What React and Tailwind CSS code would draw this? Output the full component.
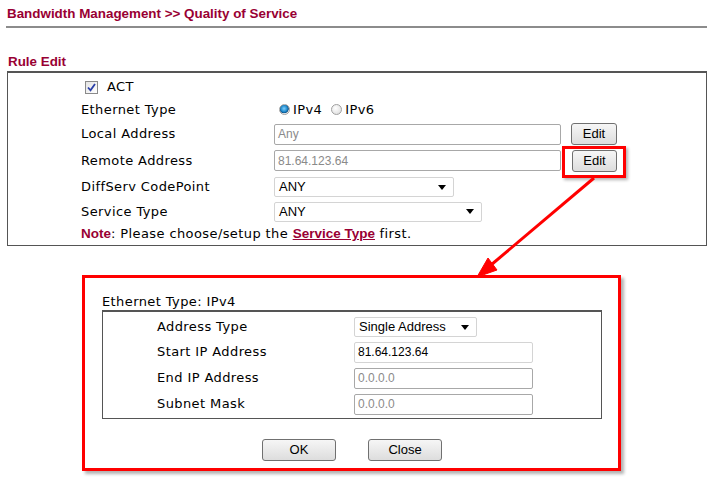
import React from 'react'

const maroon = 'text-[#990033]'
const dv = { fontFamily: '"DejaVu Sans", Verdana, sans-serif' }
const ar = { fontFamily: '"Liberation Sans", Arial, sans-serif' }

function Btn({ children, className = '' }) {
  return (
    <div
      style={ar}
      className={`flex items-center justify-center h-[22px] rounded-[3px] border border-[#707070] bg-[linear-gradient(#f6f6f6,#dddddd)] text-[13px] tracking-normal text-black ${className}`}
    >
      {children}
    </div>
  )
}

function TextBox({ value, disabled, className = '' }) {
  return (
    <div
      style={ar}
      className={`flex items-center h-[21px] px-[3px] rounded-[2px] border text-[12px] tracking-normal ${disabled ? 'border-[#a8a8a8] text-[#8a8a8a]' : 'border-[#d4d4d4] text-black'} bg-white ${className}`}
    >
      {value}
    </div>
  )
}

function Select({ value, className = '' }) {
  return (
    <div
      style={ar}
      className={`flex items-center justify-between h-[20px] pl-[4px] pr-[7px] rounded-[2px] border border-[#d4d4d4] bg-white text-[13px] tracking-normal text-black ${className}`}
    >
      <span>{value}</span>
      <svg width="8" height="5" viewBox="0 0 8 5"><path d="M0 0h8L4 5z" fill="#000" /></svg>
    </div>
  )
}

function Radio({ on }) {
  return (
    <span
      className={`inline-block w-[11px] h-[11px] rounded-full border border-[#a0a0a0] ${on ? 'bg-[radial-gradient(circle_at_45%_40%,#7fd0ff_0%,#1c86c8_45%,#0a4f86_60%,#ececec_68%,#ffffff_100%)]' : 'bg-[radial-gradient(circle_at_40%_35%,#ffffff,#d8d8d8)]'}`}
    />
  )
}

export default function App() {
  return (
    <div className="relative w-[714px] h-[486px] bg-white overflow-hidden">
      {/* page title */}
      <div style={ar} className={`pl-[7px] pt-[4px] h-[26px] text-[13.4px] font-bold ${maroon}`}>
        Bandwidth Management &gt;&gt; Quality of Service
      </div>
      <div className="ml-[6px] mr-[7px] h-[2px] bg-[#8c8c8c]" />

      <div style={ar} className={`pl-[8px] pt-[24px] h-[43px] text-[13.4px] font-bold ${maroon}`}>Rule Edit</div>

      {/* rule edit box */}
      <div style={dv} className="ml-[7px] mr-[7px] border border-[#555] border-t-2 pt-[3px] text-[13px] tracking-[0.4px] text-black">
        <div className="flex items-center h-[22px] pl-[77px]">
          <span className="flex items-center justify-center w-[13px] h-[13px] border border-[#8a8a8a] bg-[linear-gradient(135deg,#e4e4e4,#ffffff)]">
            <svg width="9" height="9" viewBox="0 0 9 9"><path d="M1 4.5l2.5 2.8L8 1" stroke="#2a3fa8" strokeWidth="1.8" fill="none" /></svg>
          </span>
          <span className="ml-[9px]">ACT</span>
        </div>
        <div className="flex items-center h-[23px] pl-[73px]">
          <span className="w-[193px]">Ethernet Type</span>
          <span className="ml-[5px] flex items-center gap-[3px]"><Radio on /><span>IPv4</span></span>
          <span className="ml-[9px] flex items-center gap-[3px]"><Radio /><span>IPv6</span></span>
        </div>
        <div className="flex items-center h-[26px] pl-[73px]">
          <span className="w-[193px]">Local Address</span>
          <TextBox value="Any" disabled className="w-[287px]" />
          <Btn className="ml-[10px] w-[46px]">Edit</Btn>
        </div>
        <div className="flex items-center h-[27px] pl-[73px]">
          <span className="w-[193px]">Remote Address</span>
          <TextBox value="81.64.123.64" disabled className="w-[287px]" />
          <Btn className="ml-[11px] w-[45px]">Edit</Btn>
        </div>
        <div className="flex items-center h-[26px] pl-[73px]">
          <span className="w-[193px]">DiffServ CodePoint</span>
          <Select value="ANY" className="w-[180px]" />
        </div>
        <div className="flex items-center h-[23px] pl-[73px]">
          <span className="w-[193px]">Service Type</span>
          <Select value="ANY" className="w-[208px]" />
        </div>
        <div className="flex items-center h-[22px] pl-[73px]">
          <span style={ar} className={`font-bold text-[13.5px] tracking-normal ${maroon}`}>Note</span>
          <span>: Please choose/setup the&nbsp;</span>
          <span style={ar} className={`font-bold underline text-[13.5px] tracking-normal ${maroon}`}>Service Type</span>
          <span>&nbsp;first.</span>
        </div>
      </div>

      {/* popup */}
      <div
        style={dv}
        className="mt-[29px] ml-[82px] w-[539px] h-[196px] border-[3px] border-[#ff0000] shadow-[3px_3px_3px_rgba(0,0,0,0.3)] pt-[15px] pl-[17px] text-[13px] tracking-[0.4px] text-black"
      >
        <div className="h-[17px] leading-[17px]">Ethernet Type: IPv4</div>
        <div className="w-[500px] h-[109px] border border-[#555] border-t-2 pt-[3px]">
          <div className="flex items-center h-[24px] pl-[54px]">
            <span className="w-[197px]">Address Type</span>
            <Select value="Single Address" className="w-[123px] h-[19px]" />
          </div>
          <div className="flex items-center h-[26px] pl-[54px]">
            <span className="w-[197px]">Start IP Address</span>
            <TextBox value="81.64.123.64" className="w-[179px]" />
          </div>
          <div className="flex items-center h-[26px] pl-[54px]">
            <span className="w-[197px]">End IP Address</span>
            <TextBox value="0.0.0.0" disabled className="w-[179px]" />
          </div>
          <div className="flex items-center h-[26px] pl-[54px]">
            <span className="w-[197px]">Subnet Mask</span>
            <TextBox value="0.0.0.0" disabled className="w-[179px]" />
          </div>
        </div>
        <div className="flex mt-[20px] pl-[160px] gap-[32px]">
          <Btn className="w-[74px]">OK</Btn>
          <Btn className="w-[74px]">Close</Btn>
        </div>
      </div>

      {/* highlight around the Edit button */}
      <div className="absolute left-[562px] top-[146px] w-[64px] h-[32px] border-[3px] border-[#ff0000] shadow-[2px_2px_3px_rgba(0,0,0,0.3)]" />

      {/* arrow */}
      <svg className="absolute left-0 top-0" width="714" height="486" viewBox="0 0 714 486">
        <g fill="#ff0000" stroke="#ff0000">
          <line x1="594" y1="178" x2="491" y2="265" strokeWidth="3" />
          <polygon points="477,277 497,270 488,258" strokeWidth="1" />
        </g>
      </svg>
    </div>
  )
}
